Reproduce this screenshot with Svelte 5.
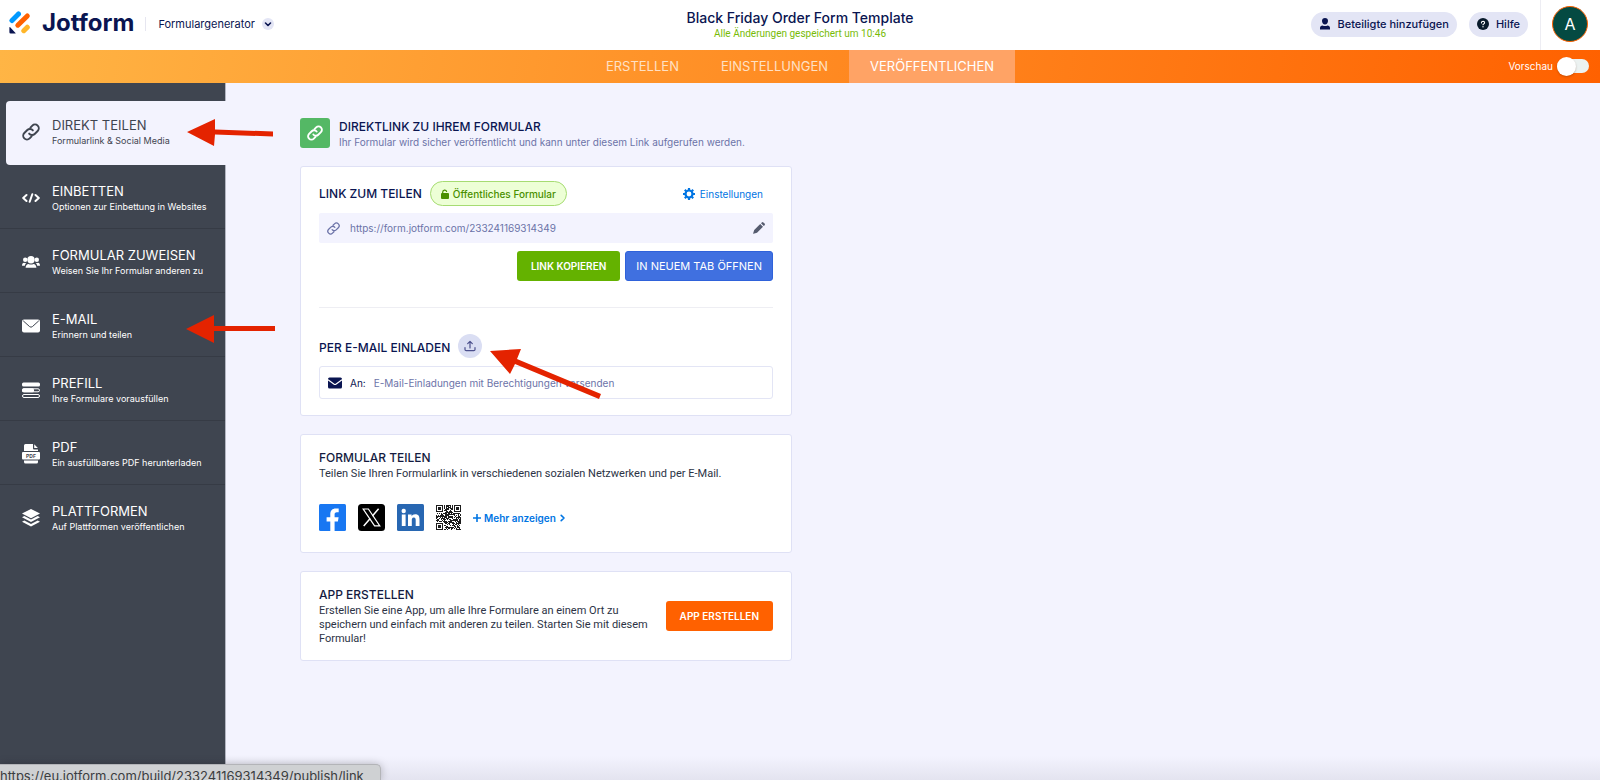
<script>
  const tabs = [
    { label: 'ERSTELLEN', active: false },
    { label: 'EINSTELLUNGEN', active: false },
    { label: 'VERÖFFENTLICHEN', active: true }
  ];

  const items = [
    { icon: 'link', title: 'DIREKT TEILEN', text: 'Formularlink & Social Media', active: true },
    { icon: 'code', title: 'EINBETTEN', text: 'Optionen zur Einbettung in Websites' },
    { icon: 'users', title: 'FORMULAR ZUWEISEN', text: 'Weisen Sie Ihr Formular anderen zu' },
    { icon: 'mail', title: 'E-MAIL', text: 'Erinnern und teilen' },
    { icon: 'prefill', title: 'PREFILL', text: 'Ihre Formulare vorausfüllen' },
    { icon: 'pdf', title: 'PDF', text: 'Ein ausfüllbares PDF herunterladen' },
    { icon: 'layers', title: 'PLATTFORMEN', text: 'Auf Plattformen veröffentlichen' }
  ];

  let preview = $state(false);
  let invite = $state('');

  // Module grid of the QR symbol: three finder squares plus data cells.
  const size = 25;
  function finder(x, y) {
    for (const [ox, oy] of [[0, 0], [size - 7, 0], [0, size - 7]]) {
      const dx = x - ox;
      const dy = y - oy;
      if (dx >= -1 && dx <= 7 && dy >= -1 && dy <= 7) {
        if (dx < 0 || dx > 6 || dy < 0 || dy > 6) return 0;
        const ring = Math.max(Math.abs(dx - 3), Math.abs(dy - 3));
        return ring === 2 ? 0 : 1;
      }
    }
    return -1;
  }
  let seed = 97;
  let qrPath = '';
  for (let y = 0; y < size; y++) {
    for (let x = 0; x < size; x++) {
      seed = (seed * 1103515245 + 12345) % 2147483648;
      const f = finder(x, y);
      if (f === 1 || (f === -1 && seed / 2147483648 > 0.42)) qrPath += `M${x} ${y}h1v1h-1z`;
    }
  }
</script>

{#snippet chain(width)}
  <svg viewBox="0 0 24 24" fill="none" stroke="currentColor" stroke-width={width} stroke-linecap="round" stroke-linejoin="round" aria-hidden="true">
    <path d="M9.5 14.2a5 5 0 0 0 7.4.4l4-4a5 5 0 0 0-7.1-7.1l-2.6 2.6" />
    <path d="M14.5 9.8a5 5 0 0 0-7.4-.4l-4 4a5 5 0 0 0 7.1 7.1l2.6-2.6" />
  </svg>
{/snippet}

{#snippet sideIcon(name)}
  {#if name === 'link'}
    {@render chain(2.6)}
  {:else if name === 'code'}
    <svg viewBox="0 0 18 18" fill="none" stroke="currentColor" stroke-width="2" stroke-linecap="round" stroke-linejoin="round" aria-hidden="true">
      <path d="M4.5 6 1.2 9l3.3 3M13.5 6l3.3 3-3.3 3M10.3 5.2 7.7 12.8" />
    </svg>
  {:else if name === 'users'}
    <svg viewBox="0 0 18 18" fill="currentColor" aria-hidden="true">
      <circle cx="9" cy="6.800" r="3.700" /><circle cx="3.200" cy="6.800" r="2.200" /><circle cx="14.800" cy="6.800" r="2.200" />
      <path d="M3.600 14.800c0-2.700 1.500-3.900 2.900-3.900 1.500.9 3.500.9 5 0 1.400 0 2.900 1.200 2.900 3.900zM0 12.800c0-2 .8-3.100 2-3.100.8.400 1.700.4 2.500.1-.9.700-1.500 1.700-1.700 3zM18 12.800c0-2-.8-3.100-2-3.100-.8.400-1.700.4-2.500.1.9.7 1.500 1.700 1.700 3z" />
    </svg>
  {:else if name === 'mail'}
    <svg viewBox="0 0 18 18" aria-hidden="true">
      <rect x="0" y="2.500" width="18" height="13" rx="2" fill="currentColor" />
      <path d="M1.200 3.800 7.600 9.600q1.400 1.200 2.800 0l6.400-5.800" fill="none" stroke="#3f4550" stroke-width="1" />
    </svg>
  {:else if name === 'prefill'}
    <svg viewBox="0 0 18 18" aria-hidden="true">
      <rect x="0" y="1.500" width="18" height="4" rx="1.500" fill="currentColor" />
      <rect x=".5" y="7.800" width="17" height="3" rx="1.500" fill="none" stroke="currentColor" />
      <rect x="0" y="7.300" width="12" height="4" rx="1.500" fill="currentColor" />
      <rect x=".5" y="13.500" width="17" height="3" rx="1.500" fill="none" stroke="currentColor" />
    </svg>
  {:else if name === 'pdf'}
    <svg viewBox="0 0 18 20" aria-hidden="true">
      <path d="M2 1.500Q2 0 3.500 0H11v4.500q0 1 1 1h4V7H2zM12.200.2 15.900 4h-3.700zM2 16.500h14V18q0 1.500-1.500 1.500h-11Q2 19.500 2 18z" fill="currentColor" />
      <rect x="0" y="8" width="18" height="7.500" rx="1" fill="currentColor" />
      <text x="9" y="13.500" text-anchor="middle" font-size="5" font-weight="700" fill="#3f4550">PDF</text>
    </svg>
  {:else}
    <svg viewBox="0 0 18 18" aria-hidden="true">
      <path d="M9 0 18 4.600 9 9.200 0 4.600z" fill="currentColor" />
      <path d="M0 8.200 2.300 7 9 10.400 15.700 7 18 8.200 9 13zM0 12.800l2.300-1.200L9 15l6.700-3.400 2.300 1.200-9 4.800z" fill="currentColor" />
    </svg>
  {/if}
{/snippet}

<div class="page">
  <header class="top">
    <div class="brand">
      <a class="logo" href="#home">
        <svg viewBox="0 0 22 23" aria-hidden="true">
          <g fill="none" stroke-width="5" stroke-linecap="round">
            <path d="M3 9.500 9.500 3" stroke="#0099ff" />
            <path d="M8.800 14.200 18.300 5" stroke="#ff6100" />
            <path d="M14.800 19.700 18.300 16.200" stroke="#ffb629" />
          </g>
          <path d="M.4 16.500v4.700q0 1.300 1.300 1.300h4.500q.8 0 .3-.6L1.200 16.200q-.8-.6-.8.300z" fill="#0a1551" />
        </svg>
        <span>Jotform</span>
      </a>
      <button class="product" type="button">
        Formulargenerator
        <span class="chev"><svg viewBox="0 0 12 12" aria-hidden="true"><path d="m3.500 5 2.500 2.500L8.500 5" fill="none" stroke="#0a1551" stroke-width="1.600" stroke-linecap="round" stroke-linejoin="round" /></svg></span>
      </button>
    </div>
    <div class="doc">
      <h1>Black Friday Order Form Template</h1>
      <p>Alle Änderungen gespeichert um 10:46</p>
    </div>
    <div class="account">
      <button class="pill" type="button">
        <svg viewBox="0 0 12 12" aria-hidden="true"><path d="M6 0a3 3 0 0 1 3 3c0 1.900-1.300 3.500-3 3.500S3 4.900 3 3a3 3 0 0 1 3-3zM1 11.500V10c0-1.500 1-2.500 2.500-2.500q2.500 1 5 0C10 7.500 11 8.500 11 10v1.500z" fill="#0a1551" /></svg>
        Beteiligte hinzufügen
      </button>
      <button class="pill" type="button">
        <svg viewBox="0 0 12 12" aria-hidden="true"><circle cx="6" cy="6" r="6" fill="#091b2c" /><path d="M4.400 4.900q.1-1.600 1.700-1.600 1.500.1 1.500 1.400 0 .8-1 1.200-.6.300-.6.900" fill="none" stroke="#fff" stroke-width="1.100" stroke-linecap="round" /><circle cx="6" cy="8.700" r=".7" fill="#fff" /></svg>
        Hilfe
      </button>
      <div class="user"><button class="avatar" type="button">A</button></div>
    </div>
  </header>

  <div class="bar">
    <nav class="tabs">
      {#each tabs as tab}
        <a href="#tab" class:active={tab.active}>{tab.label}</a>
      {/each}
    </nav>
    <label class="preview">
      Vorschau
      <input type="checkbox" role="switch" bind:checked={preview} />
    </label>
  </div>

  <div class="body">
    <nav class="side">
      {#each items as item}
        <a href="#panel" class:active={item.active}>
          <span class="icon">{@render sideIcon(item.icon)}</span>
          <span class="label"><b>{item.title}</b><small>{item.text}</small></span>
        </a>
      {/each}
    </nav>

    <main>
      <div class="intro">
        <span class="badge-icon">{@render chain(2.800)}</span>
        <div>
          <h2>DIREKTLINK ZU IHREM FORMULAR</h2>
          <p>Ihr Formular wird sicher veröffentlicht und kann unter diesem Link aufgerufen werden.</p>
        </div>
      </div>

      <section class="card share">
        <div class="row">
          <label class="head" for="share-link">LINK ZUM TEILEN</label>
          <button class="public" type="button">
            <svg viewBox="0 0 8 10" aria-hidden="true"><rect x="0" y="4" width="8" height="6" rx="1" fill="#4a9000" /><path d="M1.700 4.500V3a2 2 0 0 1 3.900-.5" fill="none" stroke="#4a9000" stroke-width="1.200" stroke-linecap="round" /></svg>
            Öffentliches Formular
          </button>
          <button class="settings" type="button">
            <svg viewBox="0 0 12 12" aria-hidden="true"><circle cx="6" cy="6" r="3.500" fill="none" stroke="#0075e3" stroke-width="2.200" /><path d="M6 0v2M6 10v2M0 6h2M10 6h2M1.800 1.800l1.400 1.400M8.800 8.800l1.400 1.400M1.800 10.200l1.400-1.400M8.800 3.200l1.400-1.400" stroke="#0075e3" stroke-width="2.200" /></svg>
            Einstellungen
          </button>
        </div>
        <div class="url">
          <span class="url-icon">{@render chain(2.400)}</span>
          <input id="share-link" type="text" readonly value="https://form.jotform.com/233241169314349" />
          <button type="button" aria-label="Link bearbeiten">
            <svg viewBox="0 0 12 12" aria-hidden="true"><path d="m7.200 2 2.800 2.800-6 6L.4 11.800q-.4 0-.3-.4L1.200 8zM8 1.200l.8-.8q.8-.7 1.600 0l1.200 1.200q.7.800 0 1.600l-.8.8z" fill="#555b6e" /></svg>
          </button>
        </div>
        <div class="actions">
          <button class="btn green" type="button">LINK KOPIEREN</button>
          <button class="btn blue" type="button">IN NEUEM TAB ÖFFNEN</button>
        </div>
        <hr />
        <div class="row invite">
          <label class="head" for="invite">PER E-MAIL EINLADEN</label>
          <button class="upload" type="button" aria-label="Hochladen">
            <svg viewBox="0 0 12 12" fill="none" stroke="#4b4f8c" stroke-width="1.200" stroke-linecap="round" stroke-linejoin="round" aria-hidden="true"><path d="M6 8V1.500M3.700 3.600 6 1.300l2.300 2.300M1 7.500v2q0 1.200 1.200 1.200h7.600q1.200 0 1.200-1.200v-2" /></svg>
          </button>
        </div>
        <div class="to">
          <svg viewBox="0 0 14 12" aria-hidden="true"><rect y=".5" width="14" height="11" rx="1.500" fill="#0a1551" /><path d="M0 2.700 5.800 6.900q1.200.8 2.400 0L14 2.700" fill="none" stroke="#fff" stroke-width="1.200" /></svg>
          <label for="invite">An:</label>
          <input id="invite" type="text" placeholder="E-Mail-Einladungen mit Berechtigungen versenden" bind:value={invite} />
        </div>
      </section>

      <section class="card social">
        <h3>FORMULAR TEILEN</h3>
        <p>Teilen Sie Ihren Formularlink in verschiedenen sozialen Netzwerken und per E-Mail.</p>
        <div class="networks">
          <a href="#facebook" aria-label="Facebook"><svg viewBox="0 0 27 27" aria-hidden="true"><rect width="27" height="27" rx="1.500" fill="#1877f2" /><path d="M11.300 27V17.500H7.600v-4.200h3.700v-3.200c0-3.700 2.200-5.700 5.500-5.700 1.300 0 2.900.2 2.900.2v3.600h-1.900c-1.700 0-2.200 1-2.200 2.100v3h4l-.7 4.200h-3.300V27z" fill="#fff" /></svg></a>
          <a href="#x" aria-label="X"><svg viewBox="0 0 27 27" aria-hidden="true"><rect width="27" height="27" rx="3.500" fill="#000" /><path d="M5.200 5h5.200l11.400 16.800h-5.200z" fill="none" stroke="#fff" stroke-width="1.200" /><path d="M20.600 4.800 14.400 12M12.200 14.500 5.700 22" stroke="#fff" stroke-width="1.500" /></svg></a>
          <a href="#linkedin" aria-label="LinkedIn"><svg viewBox="0 0 27 27" aria-hidden="true"><rect width="27" height="27" rx="1.500" fill="#2867b2" /><circle cx="6.700" cy="7" r="2.200" fill="#fff" /><path d="M4.800 10.600h3.800V22H4.800zM11 10.600h3.600v1.600c.6-1.100 1.900-1.900 3.600-1.900 3.500 0 4.300 2.200 4.300 5.300V22h-3.800v-5.600c0-1.500-.1-2.900-1.900-2.900s-2 1.400-2 2.900V22H11z" fill="#fff" /></svg></a>
          <a class="qr" href="#qr" aria-label="QR-Code"><svg viewBox="0 0 25 25" shape-rendering="crispEdges" aria-hidden="true"><path d={qrPath} fill="#1c1c1c" /></svg></a>
          <button class="more" type="button">
            <svg viewBox="0 0 8 8" aria-hidden="true"><path d="M4 .5v7M.5 4h7" stroke="#0075e3" stroke-width="1.600" stroke-linecap="round" /></svg>
            Mehr anzeigen
            <svg viewBox="0 0 8 8" aria-hidden="true"><path d="M2.200 1.300 5 4 2.200 6.700" fill="none" stroke="#0075e3" stroke-width="1.600" stroke-linecap="round" stroke-linejoin="round" /></svg>
          </button>
        </div>
      </section>

      <section class="card app">
        <div>
          <h3>APP ERSTELLEN</h3>
          <p>Erstellen Sie eine App, um alle Ihre Formulare an einem Ort zu speichern und einfach mit anderen zu teilen. Starten Sie mit diesem Formular!</p>
        </div>
        <button class="btn orange" type="button">APP ERSTELLEN</button>
      </section>
    </main>
  </div>

  <svg class="arrow a1" viewBox="0 0 86 28" aria-hidden="true"><path d="M0 13 28 0v10.500l58 2v5l-58-2L27 27z" /></svg>
  <svg class="arrow a2" viewBox="0 0 90 28" aria-hidden="true"><path d="M0 14 28 0v11h61v5H28v12z" /></svg>
  <svg class="arrow a3" viewBox="0 0 112 50" aria-hidden="true"><path d="M0 2 31 0l-4 10 84 35-2 5-84-35-5 10z" /></svg>
  <div class="shade"></div>
  <div class="status">https://eu.jotform.com/build/233241169314349/publish/link</div>
</div>

<style>
  :global(body) {
    margin: 0;
  }
  .page {
    position: relative;
    display: flex;
    flex-direction: column;
    min-height: 100vh;
    overflow: hidden;
    background: #f3f3fe;
    color: #0a1551;
    font-family: Inter, 'Liberation Sans', sans-serif;
    font-size: 11px;
    line-height: 14px;
  }
  .page * {
    box-sizing: border-box;
  }
  h1, h2, h3, p {
    margin: 0;
  }
  button, input {
    font: inherit;
    color: inherit;
    border: 0;
    padding: 0;
    background: none;
  }
  button {
    cursor: pointer;
    white-space: nowrap;
  }
  a {
    color: inherit;
    text-decoration: none;
  }
  svg {
    display: block;
    flex: none;
  }

  .top {
    display: grid;
    grid-template-columns: 1fr auto 1fr;
    align-items: center;
    height: 50px;
    padding-bottom: 2px;
    background: #fff;
  }
  .brand {
    display: flex;
    align-items: center;
    padding-left: 9px;
  }
  .logo {
    display: flex;
    align-items: center;
    gap: 11px;
    padding-bottom: 3px;
    font-size: 24px;
    line-height: 28px;
    font-weight: 700;
  }
  .logo svg {
    width: 22px;
    height: 23px;
  }
  .product {
    display: flex;
    align-items: center;
    gap: 7px;
    margin-left: 11px;
    padding-left: 12px;
    border-left: 1px solid #e6e6f0;
    font-size: 11px;
    line-height: 14px;
  }
  .chev {
    border-radius: 50%;
    background: #e3e5f5;
  }
  .chev svg {
    width: 12px;
    height: 12px;
  }
  .doc {
    padding-top: 1px;
    text-align: center;
  }
  .doc h1 {
    font-size: 14px;
    line-height: 18px;
    font-weight: 500;
  }
  .doc p {
    font-family: Roboto, sans-serif;
    font-size: 10px;
    line-height: 13px;
    color: #78bb07;
  }
  .account {
    display: flex;
    align-items: center;
    justify-content: flex-end;
    gap: 12px;
  }
  .pill {
    display: flex;
    align-items: center;
    gap: 7px;
    height: 25px;
    padding: 0 8px;
    border-radius: 13px;
    background: #e3e5f5;
    font-weight: 500;
    font-size: 11px;
  }
  .pill svg {
    width: 12px;
    height: 12px;
  }
  .user {
    display: flex;
    align-items: center;
    height: 50px;
    margin-bottom: -2px;
    padding: 0 12px 2px 11px;
    border-left: 1px solid #ededf3;
  }
  .avatar {
    width: 36px;
    height: 36px;
    border: 1px solid #ff6100;
    border-radius: 50%;
    background: #044a42;
    color: #fff;
    font-size: 16px;
  }

  .bar {
    display: grid;
    grid-template-columns: 1fr auto 1fr;
    height: 33px;
    background: linear-gradient(100deg, #ffb545, #ff6100);
    color: #fff;
  }
  .tabs {
    grid-column: 2;
    display: flex;
  }
  .tabs a {
    display: flex;
    align-items: center;
    padding: 0 21px 1px;
    font-size: 13px;
    color: #ffe0c4;
  }
  .tabs a.active {
    background: #ffa365;
    color: #fff;
  }
  .preview {
    display: flex;
    align-items: center;
    justify-content: flex-end;
    gap: 4px;
    padding: 0 11px 1px 0;
    font-size: 10px;
  }
  .preview input {
    appearance: none;
    display: flex;
    align-items: center;
    width: 32px;
    height: 14px;
    margin: 0;
    border-radius: 7px;
    background: #ecf2f1;
    cursor: pointer;
  }
  .preview input::before {
    content: '';
    flex: none;
    width: 19px;
    height: 19px;
    border-radius: 50%;
    background: #fff;
    box-shadow: 0 1px 2px rgba(80, 30, 0, 0.3);
  }
  .preview input:checked {
    justify-content: flex-end;
  }

  .body {
    flex: 1;
    display: flex;
  }
  .side {
    flex: none;
    width: 226px;
    padding-top: 18px;
    background: #3f4550;
    border-right: 1px solid #b3b6c2;
    color: #fff;
  }
  .side a {
    display: flex;
    align-items: center;
    gap: 12px;
    height: 64px;
    padding: 2px 0 0 22px;
    border-bottom: 1px solid #363b45;
  }
  .side a:last-child {
    border-bottom: 0;
  }
  .side a.active {
    margin: 0 -1px 0 6px;
    padding: 0 0 2px 16px;
    border: 0;
    border-radius: 4px 0 0 4px;
    background: #f3f3fe;
    color: #3f4550;
  }
  .icon svg {
    width: 18px;
    height: 20px;
  }
  .label {
    display: flex;
    flex-direction: column;
    gap: 1px;
    padding-top: 1px;
    white-space: nowrap;
  }
  .label b {
    font-size: 13px;
    line-height: 16px;
    font-weight: 400;
  }
  .label small {
    font-size: 9px;
    line-height: 14px;
  }

  main {
    flex: 1;
    display: flex;
    flex-direction: column;
    gap: 18px;
    max-width: 566px;
    padding: 35px 0 48px 74px;
  }
  .intro {
    display: flex;
    align-items: center;
    gap: 9px;
    height: 30px;
  }
  .intro div {
    padding-top: 2px;
  }
  .intro h2 {
    font-size: 12px;
    line-height: 16px;
    font-weight: 500;
  }
  .intro p {
    font-size: 10px;
    line-height: 14px;
    color: #6c73a8;
    white-space: nowrap;
  }
  .badge-icon {
    display: grid;
    place-items: center;
    flex: none;
    width: 30px;
    height: 30px;
    border-radius: 3px;
    background: #54b865;
    color: #fff;
  }
  .badge-icon svg {
    width: 16px;
    height: 16px;
  }
  .card {
    padding: 14px 18px;
    border: 1px solid #dfe1f5;
    border-radius: 3px;
    background: #fff;
  }
  .row {
    display: flex;
    align-items: center;
    gap: 8px;
  }
  .row.invite {
    align-items: flex-end;
  }
  .head {
    font-size: 12px;
    line-height: 20px;
    font-weight: 500;
  }
  .public {
    display: flex;
    align-items: center;
    gap: 4px;
    height: 25px;
    padding: 0 10px;
    border: 1px solid #a6dc72;
    border-radius: 13px;
    background: #edffd6;
    color: #4a9000;
    font-size: 10px;
    font-weight: 500;
  }
  .public svg {
    width: 8px;
    height: 10px;
  }
  .settings {
    display: flex;
    align-items: center;
    gap: 5px;
    margin-left: auto;
    padding-right: 10px;
    color: #0075e3;
    font-size: 10px;
  }
  .settings svg {
    width: 12px;
    height: 12px;
  }
  .url {
    display: flex;
    align-items: center;
    height: 30px;
    margin-top: 7px;
    padding: 0 8px;
    border-radius: 2px;
    background: #f3f3fe;
    color: #6c73a8;
  }
  .url-icon svg {
    width: 13px;
    height: 13px;
  }
  .url input {
    flex: 1;
    min-width: 0;
    margin-left: 10px;
    font-size: 10px;
    outline: none;
  }
  .url button svg {
    width: 12px;
    height: 12px;
  }
  .actions {
    display: flex;
    justify-content: flex-end;
    gap: 5px;
    margin-top: 8px;
  }
  .btn {
    height: 30px;
    padding: 0 14px;
    border-radius: 3px;
    color: #fff;
    font-size: 10px;
    font-weight: 600;
  }
  .blue {
    padding: 0 10px;
    border: 1px solid #2f62da;
    background: #4070e0;
    font-size: 11px;
    font-weight: 400;
  }
  .green {
    background: #64b200;
  }
  .orange {
    flex: none;
    background: #ff6100;
  }
  hr {
    margin: 26px 0;
    border: 0;
    border-top: 1px solid #eeeef3;
  }
  .upload {
    display: grid;
    place-items: center;
    width: 24px;
    height: 24px;
    border-radius: 50%;
    background: #dadef3;
  }
  .upload svg {
    width: 12px;
    height: 12px;
  }
  .to {
    display: flex;
    align-items: center;
    gap: 8px;
    height: 33px;
    margin: 8px 0 2px;
    padding: 0 8px;
    border: 1px solid #e3e5f5;
    border-radius: 3px;
    font-size: 10px;
  }
  .to svg {
    width: 14px;
    height: 12px;
  }
  .to input {
    flex: 1;
    min-width: 0;
    outline: none;
  }
  .to input::placeholder {
    color: #6c73a8;
    opacity: 1;
  }
  h3 {
    font-size: 12px;
    line-height: 18px;
    font-weight: 500;
    color: #141b3f;
  }
  .card p {
    font-family: Roboto, sans-serif;
    font-size: 11px;
    line-height: 14px;
    color: #2c3345;
  }
  .social p {
    white-space: nowrap;
  }
  .networks {
    display: flex;
    align-items: center;
    gap: 12px;
    margin: 23px 0 7px;
  }
  .networks a svg {
    width: 27px;
    height: 27px;
  }
  .networks .qr svg {
    width: 25px;
    height: 25px;
  }
  .more {
    display: flex;
    align-items: center;
    gap: 3px;
    color: #0075e3;
    font-size: 10px;
    font-weight: 600;
  }
  .more svg {
    width: 8px;
    height: 8px;
  }
  .app {
    display: flex;
    align-items: center;
    gap: 8px;
  }
  .arrow {
    position: absolute;
    fill: #e42300;
    pointer-events: none;
  }
  .a1 {
    left: 187px;
    top: 119px;
    width: 86px;
  }
  .a2 {
    left: 186px;
    top: 315px;
    width: 90px;
  }
  .a3 {
    left: 490px;
    top: 349px;
    width: 112px;
  }
  .shade {
    position: absolute;
    inset: auto 0 0 0;
    height: 24px;
    background: linear-gradient(rgba(90, 90, 110, 0), rgba(90, 90, 110, 0.1));
    pointer-events: none;
  }
  .status {
    position: absolute;
    left: 0;
    bottom: 0;
    height: 16px;
    padding: 3px 16px 0 0;
    border: 1px solid #b3b4b8;
    border-width: 1px 1px 0 0;
    border-radius: 0 5px 0 0;
    background: #cfd1d3;
    box-shadow: 0 0 8px rgba(0, 0, 0, 0.25);
    color: #3b3d40;
    font-size: 13px;
    line-height: 16px;
    overflow: hidden;
    white-space: nowrap;
  }
</style>
